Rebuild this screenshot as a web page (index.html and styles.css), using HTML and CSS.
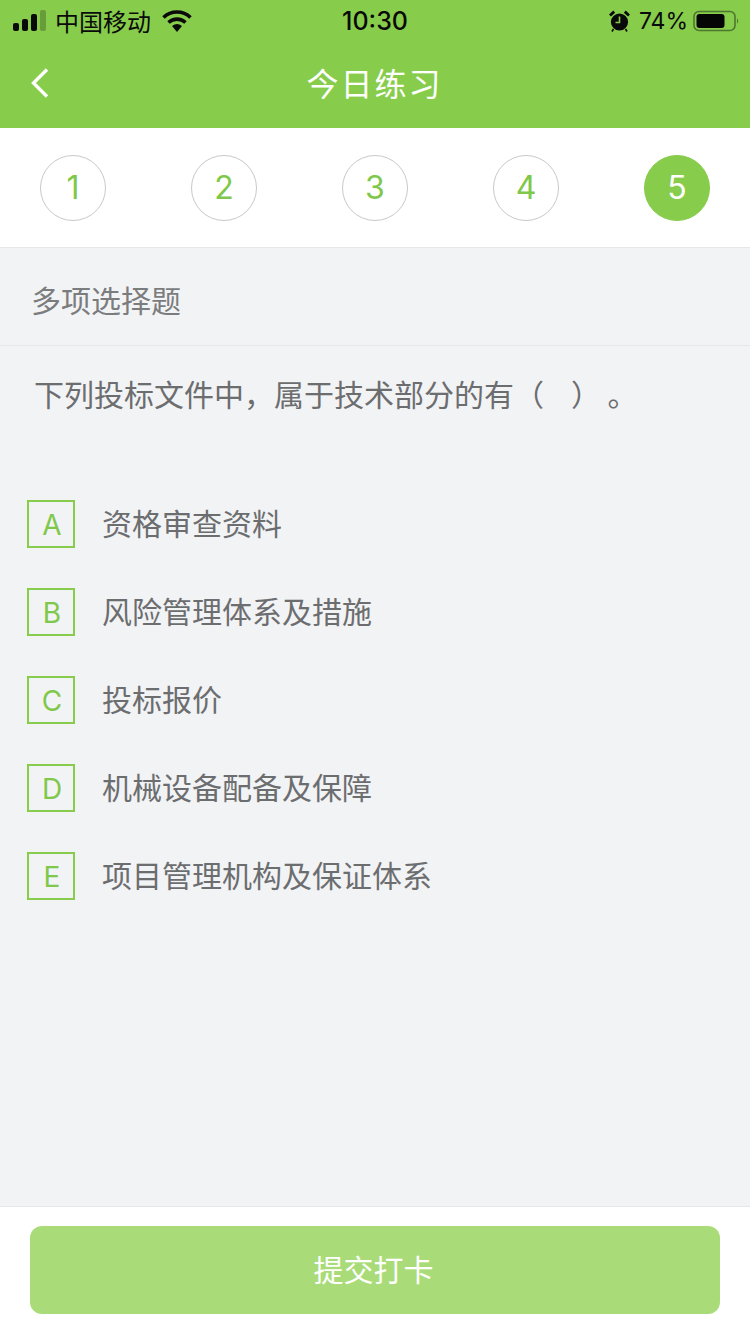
FILE: index.html
```html
<!DOCTYPE html>
<html lang="zh-CN">
<head>
<meta charset="utf-8">
<title>今日练习</title>
<link rel="stylesheet" href="styles.css">
</head>
<body>
<div class="page">
  <header class="header">
    <div class="status">
      <div class="status-left">
        <svg class="signal" width="34" height="22" viewBox="0 0 34 22"><rect x="0" y="13" width="6" height="8" rx="2" fill="#0a0a0a"/><rect x="9" y="9" width="6" height="12" rx="2" fill="#0a0a0a"/><rect x="18" y="4" width="6" height="17" rx="2" fill="#0a0a0a"/><rect x="27" y="0" width="6" height="21" rx="2" fill="#0a0a0a" opacity=".25"/></svg>
        <span class="carrier">中国移动</span>
        <svg class="wifi" width="30" height="22" viewBox="0 0 30 22"><path d="M1.500 7.500a19.500 19.500 0 0 1 27 0" fill="none" stroke="#0a0a0a" stroke-width="3.600"/><path d="M6.500 12.500a12.500 12.500 0 0 1 17 0" fill="none" stroke="#0a0a0a" stroke-width="3.600"/><path d="M10 16a8 8 0 0 1 10 0l-5 6z" fill="#0a0a0a"/></svg>
      </div>
      <span class="time">10:30</span>
      <div class="status-right">
        <svg class="alarm" width="21" height="22" viewBox="0 0 21 22"><circle cx="10.500" cy="12" r="8.600" fill="#0a0a0a"/><path d="M10.500 6.500v6H6.500" fill="none" stroke="#87cd4b" stroke-width="1.600"/><path d="M1 5.500 5.200 1.600M20 5.500 15.800 1.600" stroke="#0a0a0a" stroke-width="2.800"/><path d="M4.500 19 3 21.500M16.500 19l1.500 2.500" stroke="#0a0a0a" stroke-width="1.600"/></svg>
        <span class="percent">74%</span>
        <svg class="battery" width="46" height="22" viewBox="0 0 46 22"><rect x="1" y="1.500" width="41" height="19" rx="5" fill="none" stroke="#0a0a0a" stroke-opacity=".45" stroke-width="1.600"/><rect x="3.500" y="4" width="28" height="14" rx="3" fill="#050505"/><path d="M44 8.500c1.500.6 1.500 4.400 0 5z" fill="#0a0a0a" fill-opacity=".45"/></svg>
      </div>
    </div>
    <div class="nav">
      <svg class="back" width="20" height="32" viewBox="0 0 20 32"><path d="M17 2.500 3.500 16 17 29.500" fill="none" stroke="#fff" stroke-width="3.400"/></svg>
      <h1 class="title">今日练习</h1>
    </div>
  </header>

  <nav class="steps">
    <span class="step">1</span>
    <span class="step">2</span>
    <span class="step">3</span>
    <span class="step">4</span>
    <span class="step step-active">5</span>
  </nav>

  <main class="main">
    <div class="kind">多项选择题</div>
    <p class="question">下列投标文件中，属于技术部分的有（&nbsp;&nbsp;&nbsp;&nbsp;）&nbsp;。</p>
    <ul class="options">
      <li class="option"><span class="letter">A</span><span class="option-text">资格审查资料</span></li>
      <li class="option"><span class="letter">B</span><span class="option-text">风险管理体系及措施</span></li>
      <li class="option"><span class="letter">C</span><span class="option-text">投标报价</span></li>
      <li class="option"><span class="letter">D</span><span class="option-text">机械设备配备及保障</span></li>
      <li class="option"><span class="letter">E</span><span class="option-text">项目管理机构及保证体系</span></li>
    </ul>
  </main>

  <footer class="footer">
    <button class="submit" type="button">提交打卡</button>
  </footer>
</div>
</body>
</html>
```
FILE: styles.css
```css
* { box-sizing: border-box; }
html, body { margin: 0; padding: 0; }
body {
  width: 750px;
  height: 1334px;
  overflow: hidden;
  background: #f2f3f5;
  font-family: "Inter", "Noto Sans CJK SC", sans-serif;
}
.page { display: flex; flex-direction: column; height: 1334px; }

.header { height: 128px; background: #87cd4b; flex: none; }
.status {
  height: 40px;
  padding: 0 11px 0 13px;
  display: grid;
  grid-template-columns: 1fr auto 1fr;
  align-items: center;
  color: #0a0a0a;
}
.status-left { display: flex; align-items: center; }
.carrier { margin-left: 8px; font-size: 24px; line-height: 40px; font-family: "Noto Sans CJK SC", sans-serif; }
.wifi { margin-left: 11px; }
.time { padding: 1px 2px 0 0; font-size: 25px; font-weight: 500; line-height: 40px; font-family: "Inter", sans-serif; }
.status-right { display: flex; align-items: center; justify-content: flex-end; }
.percent { margin-left: 9px; padding-top: 1px; font-size: 23px; line-height: 40px; font-family: "Inter", sans-serif; }
.battery { margin-left: 5px; }

.nav {
  height: 88px;
  padding-left: 30px;
  display: flex;
  align-items: center;
  position: relative;
}
.back { flex: none; margin-top: -3px; }
.title {
  position: absolute;
  left: 0;
  right: 0;
  margin: 0;
  padding: 0 1px 4px 0;
  text-align: center;
  color: #fff;
  font-size: 32px;
  font-weight: 400;
  letter-spacing: 2px;
  font-family: "Noto Sans CJK SC", sans-serif;
}

.steps {
  height: 120px;
  flex: none;
  background: #fff;
  border-bottom: 1px solid #e6e7e9;
  padding: 0 40px;
  display: flex;
  align-items: center;
  justify-content: space-between;
}
.step {
  width: 66px;
  height: 66px;
  border: 1px solid #c9c9c9;
  border-radius: 50%;
  display: flex;
  align-items: center;
  justify-content: center;
  color: #80c84a;
  font-size: 32px;
  font-weight: 400;
  margin-top: 1px;
  margin-bottom: 1px;
}
.step-active { background: #87cd4b; border-color: #87cd4b; color: #fff; }

.main { flex: 1; min-height: 0; }
.kind {
  height: 98px;
  padding: 4px 31px 0;
  display: flex;
  align-items: center;
  border-bottom: 1px solid #e6e7e9;
  color: #7b7c7e;
  font-size: 30px;
  font-family: "Noto Sans CJK SC", sans-serif;
}
.question {
  margin: 0;
  padding: 24px 34px 0;
  height: 132px;
  color: #6c6d6f;
  font-size: 30px;
  line-height: 46px;
  font-family: "Noto Sans CJK SC", "Noto Sans", sans-serif;
}
.options { list-style: none; margin: 0; padding: 22px 0 0 27px; display: flex; flex-direction: column; gap: 40px; }
.option { display: flex; align-items: center; height: 48px; }
.letter {
  width: 48px;
  height: 48px;
  flex: none;
  border: 2px solid #87cd4b;
  display: flex;
  align-items: center;
  justify-content: center;
  padding: 2px 0 0 2px;
  color: #80c84a;
  font-size: 28px;
  font-weight: 400;
}
.option-text {
  margin-left: 27px;
  margin-top: -4px;
  color: #6c6d6f;
  font-size: 30px;
  font-family: "Noto Sans CJK SC", sans-serif;
}

.footer {
  height: 128px;
  flex: none;
  background: #fff;
  border-top: 1px solid #e6e7e9;
  padding: 19px 30px 0;
}
.submit {
  display: block;
  width: 100%;
  height: 88px;
  border: 0;
  border-radius: 12px;
  padding: 0 3px 4px 0;
  background: #a9dc78;
  color: #fff;
  font-size: 30px;
  font-family: "Noto Sans CJK SC", sans-serif;
}
```
